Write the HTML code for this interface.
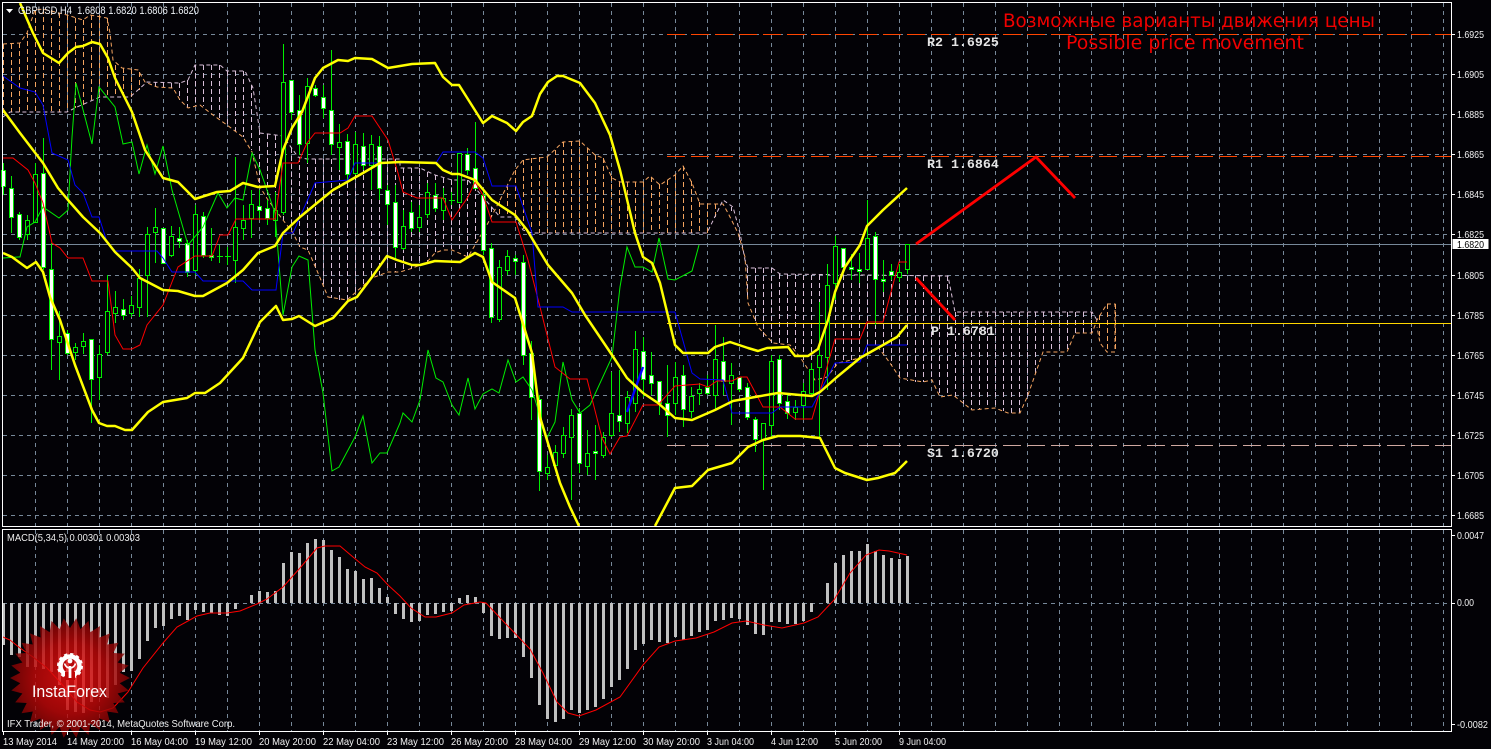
<!DOCTYPE html>
<html><head><meta charset="utf-8"><title>GBPUSD H4</title>
<style>
html,body{margin:0;padding:0;background:#030206;overflow:hidden}
svg{display:block}
text{font-family:"Liberation Sans","DejaVu Sans",sans-serif}
.ax{font-size:10.5px;fill:#f2f2f2}
.lv{font-family:"Liberation Mono",monospace;font-size:13.3px;font-weight:bold;fill:#e4e4e4}
.rd{font-family:"DejaVu Sans",sans-serif;font-size:19px;fill:#f00000}
</style></head>
<body>
<svg width="1491" height="749" viewBox="0 0 1491 749" xmlns="http://www.w3.org/2000/svg">
<rect width="1491" height="749" fill="#030206"/>

<!-- grid -->
<g stroke="#778899" stroke-width="1" fill="none" shape-rendering="crispEdges" stroke-dasharray="4 4">
<path d="M3 34.5H1451M3 74.5H1451M3 114.5H1451M3 154.5H1451M3 194.5H1451M3 234.5H1451M3 275.5H1451M3 315.5H1451M3 355.5H1451M3 395.5H1451M3 435.5H1451M3 475.5H1451M3 515.5H1451"/>
<path d="M35.5 3V526M67.5 3V526M99.5 3V526M131.5 3V526M163.5 3V526M195.5 3V526M227.5 3V526M259.5 3V526M291.5 3V526M323.5 3V526M355.5 3V526M387.5 3V526M419.5 3V526M451.5 3V526M483.5 3V526M515.5 3V526M547.5 3V526M579.5 3V526M611.5 3V526M643.5 3V526M675.5 3V526M707.5 3V526M739.5 3V526M771.5 3V526M803.5 3V526M835.5 3V526M867.5 3V526M899.5 3V526M931.5 3V526M963.5 3V526M995.5 3V526M1027.5 3V526M1059.5 3V526M1091.5 3V526M1123.5 3V526M1155.5 3V526M1187.5 3V526M1219.5 3V526M1251.5 3V526M1283.5 3V526M1315.5 3V526M1347.5 3V526M1379.5 3V526M1411.5 3V526M1443.5 3V526"/>
<path d="M35.5 530V731M67.5 530V731M99.5 530V731M131.5 530V731M163.5 530V731M195.5 530V731M227.5 530V731M259.5 530V731M291.5 530V731M323.5 530V731M355.5 530V731M387.5 530V731M419.5 530V731M451.5 530V731M483.5 530V731M515.5 530V731M547.5 530V731M579.5 530V731M611.5 530V731M643.5 530V731M675.5 530V731M707.5 530V731M739.5 530V731M771.5 530V731M803.5 530V731M835.5 530V731M867.5 530V731M899.5 530V731M931.5 530V731M963.5 530V731M995.5 530V731M1027.5 530V731M1059.5 530V731M1091.5 530V731M1123.5 530V731M1155.5 530V731M1187.5 530V731M1219.5 530V731M1251.5 530V731M1283.5 530V731M1315.5 530V731M1347.5 530V731M1379.5 530V731M1411.5 530V731M1443.5 530V731"/>
<path d="M3 603.5H1451"/>
</g>

<!-- cloud hatch -->
<g fill="none" stroke-width="1" shape-rendering="crispEdges" stroke-dasharray="5 3">
<path stroke="#f4a460" d="M3.5 44V117M11.5 44V112M19.5 43V112M27.5 33V112M35.5 10V112M43.5 9V112M51.5 10V112M59.5 13V112M67.5 15V112M75.5 18V108M83.5 20V105M91.5 15V102M99.5 15V97M107.5 18V97M115.5 65V97M123.5 68V97M131.5 69V97M139.5 72V90M499.5 201V216M507.5 185V217M515.5 170V217M523.5 160V230M531.5 158V233M539.5 157V233M547.5 157V233M555.5 150V233M563.5 142V233M571.5 141V233M579.5 141V233M587.5 148V233M595.5 155V233M603.5 158V233M611.5 176V233M619.5 182V233M627.5 182V233M635.5 182V233M643.5 182V233M651.5 177V233M659.5 184V233M667.5 180V233M675.5 175V233M683.5 166V233M691.5 181V233M699.5 202V233M707.5 204V233M715.5 204V220M1099.5 315V340M1107.5 304V352M1115.5 304V352"/>
<path stroke="#d8bfd8" d="M155.5 82V87M163.5 82V87M171.5 83V88M179.5 83V100M187.5 80V108M195.5 65V106M203.5 65V106M211.5 65V113M219.5 65V120M227.5 71V125M235.5 71V131M243.5 71V137M251.5 85V150M259.5 130V184M267.5 134V198M275.5 135V212M283.5 136V220M291.5 148V230M299.5 157V247M307.5 159V250M315.5 159V270M323.5 159V285M331.5 159V298M339.5 159V300M347.5 159V300M355.5 159V292M363.5 159V286M371.5 159V278M379.5 159V275M387.5 159V271M395.5 159V272M403.5 168V272M411.5 168V270M419.5 168V266M427.5 172V262M435.5 175V253M443.5 178V250M451.5 180V250M459.5 180V252M467.5 180V257M475.5 186V243M483.5 197V230M491.5 207V217M731.5 207V211M739.5 235V240M747.5 268V300M755.5 268V322M763.5 268V337M771.5 268V343M779.5 274V345M787.5 274V346M795.5 274V349M803.5 275V361M811.5 275V375M819.5 275V379M827.5 275V377M835.5 275V367M843.5 275V362M851.5 275V360M859.5 275V358M867.5 276V355M875.5 276V349M883.5 276V354M891.5 276V365M899.5 276V377M907.5 276V381M915.5 276V382M923.5 276V382M931.5 276V380M939.5 276V395M947.5 276V396M955.5 312V398M963.5 312V404M971.5 312V410M979.5 312V409M987.5 312V408M995.5 312V408M1003.5 312V411M1011.5 312V413M1019.5 312V413M1027.5 312V398M1035.5 312V375M1043.5 312V352M1051.5 312V352M1059.5 312V352M1067.5 312V352M1075.5 312V333M1083.5 312V333M1091.5 312V333"/>
</g>
<!-- cloud boundary -->
<g fill="none" stroke-width="1" stroke-dasharray="4 3">
<path stroke="#f4a460" d="M3 44L20 43L27 33L35 10L43 9L67 15L83 20L90 15L107 18L110 33L113 60L122 68L138 70L145 82L157 87L173 88L180 100L188 108L200 105L213 115L227 125L243 137L252 152L260 187L268 200L283 220L293 233L300 247L308 250L318 273L328 297L347 300L372 278L388 272L400 272L413 268L427 262L435 253L443 250L452 250L468 257L488 223L500 200L515 170L523 160L547 157L563 142L580 141L595 155L603 158L612 178L620 182L643 182L650 176L660 185L675 175L683 166L692 183L700 204L723 204L728 213L738 233L745 257L748 303L758 327L773 343L790 345L800 357L815 380L827 377L838 363L860 358L878 347L890 363L900 378L923 382L932 380L940 397L953 395L972 410L995 408L1008 413L1020 413L1028 395L1043 352L1067 352L1075 333L1092 333L1097 320L1107 304L1115 304L1115 352L1107 352L1100 343L1097 327"/>
<path stroke="#d8bfd8" d="M3 117L10 112L67 112L77 107L100 97L130 97L147 82L180 83L188 80L195 65L220 65L227 71L245 71L253 88L260 133L283 136L298 157L307 159L400 159L400 168L420 168L435 175L452 180L468 180L483 197L500 217L515 217L523 230L532 233L707 233L723 200L733 207L740 233L745 260L748 268L772 268L780 274L948 276L955 312L1092 312L1097 320"/>
</g>

<!-- levels -->
<g fill="none" shape-rendering="crispEdges">
<path d="M667 34.5H1451M667 156.5H1451" stroke="#ff4500" stroke-dasharray="18 6"/>
<path d="M667 323.5H1451" stroke="#ffd700"/>
<path d="M667 445.5H1451" stroke="#cfa8a0" stroke-dasharray="18 6"/>
<path d="M3 244.5H1451" stroke="#778899"/>
</g>

<!-- wicks -->
<path fill="none" stroke="#00ee00" stroke-width="1" shape-rendering="crispEdges" d="M3.5 163V195M11.5 176V233M19.5 212V240M27.5 215V240M35.5 163V222M43.5 138V270M51.5 243V370M59.5 311V380M67.5 330V355M75.5 343V360M83.5 333V354M91.5 339V423M99.5 345V400M107.5 275V355M115.5 291V323M123.5 299V320M131.5 296V317M139.5 269V317M147.5 227V317M155.5 208V263M163.5 228V263M171.5 226V257M179.5 227V248M187.5 240V277M195.5 205V275M203.5 212V258M211.5 228V261M219.5 245V263M227.5 247V265M235.5 157V283M243.5 205V240M251.5 190V238M259.5 190V220M267.5 200V225M275.5 192V237M283.5 44V215M291.5 80V120M299.5 95V155M307.5 78V163M315.5 85V97M323.5 85V118M331.5 50V155M339.5 124V170M347.5 134V180M355.5 132V175M363.5 133V170M371.5 135V190M379.5 136V200M387.5 185V225M395.5 185V260M403.5 210V250M411.5 202V232M419.5 205V232M427.5 183V218M435.5 183V212M443.5 188V220M451.5 192V205M459.5 153V203M467.5 148V175M475.5 122V188M483.5 190V255M491.5 243V323M499.5 260V322M507.5 250V275M515.5 255V275M523.5 255V365M531.5 341V420M539.5 395V491M547.5 455V480M555.5 445V470M563.5 427V458M571.5 409V500M579.5 408V473M587.5 430V475M595.5 425V480M603.5 432V458M611.5 372V437M619.5 370V432M627.5 391V433M635.5 331V412M643.5 337V397M651.5 352V395M659.5 381V415M667.5 365V437M675.5 362V415M683.5 365V427M691.5 387V418M699.5 383V405M707.5 375V395M715.5 325V410M723.5 337V395M731.5 363V425M739.5 377V392M747.5 383V420M755.5 417V452M763.5 423V490M771.5 355V437M779.5 355V410M787.5 395V419M795.5 400V420M803.5 383V420M811.5 363V395M819.5 302V437M827.5 264V390M835.5 236V300M843.5 248V270M851.5 254V280M859.5 253V283M867.5 200V270M875.5 232V325M883.5 260V292M891.5 264V280M899.5 264V282M907.5 244V274"/>
<path fill="none" stroke="#00ee00" shape-rendering="crispEdges" d="M217 256.5h6M225 256.5h6M449 200.5h6"/>
<!-- dark bodies -->
<path fill="#030206" stroke="#00ee00" stroke-width="1" shape-rendering="crispEdges" d="M25.5 220.5h4v14h-4zM33.5 174.5h4v48h-4zM57.5 336.5h4v6h-4zM73.5 347.5h4v5h-4zM81.5 341.5h4v5h-4zM97.5 354.5h4v23h-4zM105.5 311.5h4v41h-4zM113.5 307.5h4v6h-4zM129.5 305.5h4v8h-4zM137.5 278.5h4v29h-4zM145.5 234.5h4v41h-4zM153.5 227.5h4v5h-4zM169.5 236.5h4v19h-4zM193.5 214.5h4v56h-4zM233.5 227.5h4v33h-4zM241.5 220.5h4v8h-4zM249.5 204.5h4v14h-4zM273.5 210.5h4v10h-4zM281.5 82.5h4v130h-4zM305.5 86.5h4v57h-4zM337.5 142.5h4v5h-4zM353.5 144.5h4v29h-4zM369.5 144.5h4v21h-4zM401.5 226.5h4v22h-4zM417.5 217.5h4v10h-4zM425.5 192.5h4v22h-4zM441.5 198.5h4v12h-4zM457.5 153.5h4v49h-4zM497.5 267.5h4v52h-4zM505.5 256.5h4v14h-4zM545.5 467.5h4v6h-4zM553.5 452.5h4v13h-4zM561.5 435.5h4v18h-4zM569.5 415.5h4v22h-4zM585.5 453.5h4v13h-4zM601.5 437.5h4v18h-4zM609.5 413.5h4v22h-4zM625.5 397.5h4v26h-4zM633.5 349.5h4v54h-4zM673.5 377.5h4v26h-4zM689.5 396.5h4v15h-4zM697.5 389.5h4v4h-4zM713.5 359.5h4v36h-4zM729.5 375.5h4v8h-4zM761.5 423.5h4v16h-4zM769.5 361.5h4v64h-4zM793.5 407.5h4v5h-4zM801.5 391.5h4v14h-4zM809.5 369.5h4v24h-4zM817.5 355.5h4v12h-4zM825.5 285.5h4v72h-4zM833.5 246.5h4v37h-4zM865.5 238.5h4v31h-4zM897.5 272.5h4v5h-4zM905.5 244.5h4v25h-4z"/>
<!-- white bodies -->
<path fill="#ffffff" stroke="#00ee00" stroke-width="1" shape-rendering="crispEdges" d="M1.5 170.5h4v16h-4zM9.5 188.5h4v29h-4zM17.5 214.5h4v23h-4zM41.5 173.5h4v94h-4zM49.5 269.5h4v70h-4zM65.5 333.5h4v20h-4zM89.5 339.5h4v40h-4zM121.5 309.5h4v6h-4zM161.5 228.5h4v35h-4zM177.5 238.5h4v3h-4zM185.5 243.5h4v29h-4zM201.5 216.5h4v39h-4zM209.5 255.5h4v2h-4zM257.5 206.5h4v4h-4zM265.5 208.5h4v10h-4zM289.5 80.5h4v32h-4zM297.5 110.5h4v34h-4zM313.5 88.5h4v7h-4zM321.5 97.5h4v11h-4zM329.5 110.5h4v34h-4zM345.5 141.5h4v33h-4zM361.5 146.5h4v19h-4zM377.5 146.5h4v42h-4zM385.5 190.5h4v14h-4zM393.5 202.5h4v45h-4zM409.5 212.5h4v16h-4zM433.5 195.5h4v13h-4zM465.5 154.5h4v16h-4zM473.5 168.5h4v20h-4zM481.5 195.5h4v55h-4zM489.5 248.5h4v69h-4zM513.5 258.5h4v3h-4zM521.5 262.5h4v93h-4zM529.5 353.5h4v44h-4zM537.5 399.5h4v72h-4zM577.5 413.5h4v50h-4zM593.5 451.5h4v2h-4zM617.5 415.5h4v6h-4zM641.5 351.5h4v28h-4zM649.5 375.5h4v8h-4zM657.5 381.5h4v22h-4zM665.5 403.5h4v12h-4zM681.5 375.5h4v34h-4zM705.5 387.5h4v6h-4zM721.5 361.5h4v20h-4zM737.5 377.5h4v12h-4zM745.5 387.5h4v30h-4zM753.5 419.5h4v20h-4zM777.5 359.5h4v44h-4zM785.5 401.5h4v12h-4zM841.5 248.5h4v19h-4zM849.5 267.5h4v2h-4zM857.5 269.5h4v2h-4zM873.5 236.5h4v43h-4zM881.5 279.5h4v2h-4zM889.5 271.5h4v4h-4z"/>

<!-- chikou green -->
<path fill="none" stroke="#00ee00" stroke-width="1" d="M3 258L18 257L20 257L27 227L35 222L43 207L59 218L68 210L72 137L76 83L92 144L99 87L115 107L123 144L132 142L139 174L147 145L155 174L163 146L172 190L188 245L203 227L218 193L227 208L235 198L243 200L252 153L260 170L275 213L283 315L292 267L299 256L308 260L315 350L323 393L332 471L339 467L355 437L363 416L372 463L380 453L387 453L400 423L403 413L412 422L420 400L428 350L436 378L443 382L452 405L459 415L468 378L475 409L483 394L492 389L499 393L508 360L516 382L523 377L532 390L547 438L555 422L563 362L572 400L580 413L590 405L612 357L620 287L627 247L635 267L643 267L652 272L659 238L668 279L675 280L692 271L699 245"/>
<!-- tenkan red -->
<path fill="none" stroke="#ff0000" stroke-width="1" d="M3 158L13 158L28 170L35 183L43 203L52 243L60 248L68 258L83 258L92 281L108 281L115 335L123 349L132 349L140 345L147 325L163 305L172 282L178 267L195 256L212 256L220 235L228 235L236 219L275 219L283 163L298 163L307 143L315 133L340 133L348 128L355 116L372 116L388 140L398 173L403 192L417 198L443 198L452 220L468 197L475 182L483 195L492 222L516 222L528 260L540 307L555 367L570 379L587 379L602 438L610 454L620 437L627 436L643 405L658 405L675 386L700 384L708 387L717 381L732 381L740 377L747 377L763 407L780 407L795 419L812 419L835 339L860 339L867 322L883 322L899 262L907 262"/>
<!-- kijun blue -->
<path fill="none" stroke="#0000ff" stroke-width="1" d="M3 76L20 88L35 92L43 105L52 153L68 160L75 185L83 193L92 217L99 217L107 242L115 251L157 251L163 258L172 272L195 272L203 281L243 281L252 290L276 290L283 233L293 233L315 183L348 180L355 163L436 163L443 152L475 152L483 158L492 186L516 186L532 233L538 307L563 307L572 312L675 312L692 373L700 379L723 380L732 413L772 413L780 407L812 407L835 363L860 362L867 345L907 345"/>
<path fill="none" stroke="#0000ff" stroke-width="2.4" d="M627 412L643 367"/>

<!-- bollinger yellow -->
<g fill="none" stroke="#ffff00" stroke-width="2.5" stroke-linejoin="round">
<path d="M20 3L33 33L43 53L59 63L68 53L76 47L83 46L92 42L100 44L108 58L115 78L132 112L145 150L163 178L178 182L195 199L217 192L230 191L243 183L258 187L275 186L283 150L292 128L302 112L315 78L323 68L338 60L348 61L355 58L372 59L388 68L400 66L412 64L435 63L443 77L452 85L459 85L483 123L492 116L507 123L516 131L523 122L532 116L540 94L548 82L557 76L563 76L580 83L595 103L610 135L620 170L635 233L643 257L652 263L660 283L675 345L683 353L708 353L715 347L730 342L748 348L758 351L767 348L788 347L795 356L808 356L818 349L828 320L835 292L845 267L860 245L867 226L883 210L907 188"/>
<path d="M3 110L20 133L33 150L43 163L58 188L68 200L83 217L100 233L115 252L132 268L140 278L163 290L178 291L195 296L203 296L227 283L243 270L258 253L275 246L283 233L300 217L317 203L333 190L363 173L380 163L400 162L436 163L443 170L452 174L459 174L475 180L492 200L515 215L527 230L548 265L572 293L585 315L612 355L627 378L643 393L658 403L675 418L692 420L715 410L733 401L755 397L778 393L800 395L812 396L820 392L837 377L860 358L883 345L897 337L907 325"/>
<path d="M3 253L12 257L27 268L36 262L43 272L50 297L60 320L75 365L92 410L99 423L107 426L115 426L125 430L132 430L148 412L163 402L187 398L195 393L205 393L220 383L243 358L260 322L276 306L283 320L292 319L299 316L315 326L333 318L348 301L357 297L372 277L387 256L397 260L412 265L420 265L435 261L460 262L475 253L483 257L492 282L515 298L532 353L540 417L547 440L560 483L570 507L579 526"/>
<path d="M655 526L675 488L692 486L708 470L732 463L748 447L763 440L778 436L800 436L820 438L835 468L845 473L867 480L878 478L895 473L907 461"/>
</g>

<!-- red arrows -->
<g fill="none" stroke="#ff0000" stroke-width="2.8">
<path d="M916 244L1036 157L1075 198"/>
<path d="M916 278L955 320"/>
</g>

<!-- macd bars -->
<path fill="none" stroke="#c0c0c0" stroke-width="3" shape-rendering="crispEdges" d="M3.5 603V645M11.5 603V655M19.5 603V657M27.5 603V667M35.5 603V667M43.5 603V669M51.5 603V672M59.5 603V685M67.5 603V710M75.5 603V712M83.5 603V713M91.5 603V702M99.5 603V695M107.5 603V698M115.5 603V685M123.5 603V672M131.5 603V671M139.5 603V659M147.5 603V641M155.5 603V628M163.5 603V626M171.5 603V619M179.5 603V616M187.5 603V620M195.5 603V610M203.5 603V612M211.5 603V613M219.5 603V615M227.5 603V616M235.5 603V609M251.5 603V595M259.5 603V591M267.5 603V592M275.5 603V591M283.5 603V563M291.5 603V552M299.5 603V553M307.5 603V543M315.5 603V539M323.5 603V540M331.5 603V550M339.5 603V557M347.5 603V569M355.5 603V571M363.5 603V579M371.5 603V578M379.5 603V588M387.5 603V597M395.5 603V614M403.5 603V619M411.5 603V622M419.5 603V621M427.5 603V615M435.5 603V614M443.5 603V612M451.5 603V611M459.5 603V598M467.5 603V595M475.5 603V597M483.5 603V613M491.5 603V636M499.5 603V639M507.5 603V638M515.5 603V638M523.5 603V657M531.5 603V678M539.5 603V705M547.5 603V719M555.5 603V722M563.5 603V719M571.5 603V710M579.5 603V713M587.5 603V710M595.5 603V707M603.5 603V699M611.5 603V687M619.5 603V680M627.5 603V669M635.5 603V650M643.5 603V644M651.5 603V640M659.5 603V642M667.5 603V643M675.5 603V637M683.5 603V640M691.5 603V636M699.5 603V632M707.5 603V630M715.5 603V621M723.5 603V620M731.5 603V618M739.5 603V619M747.5 603V625M755.5 603V634M763.5 603V635M771.5 603V622M779.5 603V622M787.5 603V624M795.5 603V624M803.5 603V621M811.5 603V612M827.5 603V583M835.5 603V563M843.5 603V555M851.5 603V551M859.5 603V551M867.5 603V544M875.5 603V551M883.5 603V555M891.5 603V558M899.5 603V559M907.5 603V556"/>
<!-- macd signal -->
<path fill="none" stroke="#ff0000" stroke-width="1" d="M3 637L10 640L20 648L33 657L47 668L60 682L77 702L90 710L100 712L113 708L128 692L143 668L163 643L177 627L197 616L210 613L227 613L240 611L257 604L267 599L283 587L300 568L317 548L325 546L340 546L353 557L365 567L377 573L388 585L400 596L411 608L425 617L436 617L452 613L464 605L480 602L486 603L504 622L530 649L543 673L557 702L568 713L579 716L596 710L620 697L643 665L659 647L675 641L696 638L714 632L732 623L746 621L764 625L782 628L804 623L818 617L834 600L850 573L866 555L879 550L889 551L907 555"/>

<!-- logo -->
<defs><radialGradient id="lg" cx="50%" cy="50%" r="50%"><stop offset="0" stop-color="#f01010"/><stop offset=".6" stop-color="#c00808"/><stop offset="1" stop-color="#7e0404"/></radialGradient></defs>
<polygon opacity=".82" fill="url(#lg)" points="130,678 119.7,683.2 128.7,690.5 117.6,693.5 124.8,702.4 113.3,703 118.5,713.3 107.2,711.5 110.1,722.6 99.4,718.5 100,730 90.3,723.7 88.5,735.1 80.4,726.9 76.3,737.7 70,728 63.7,737.7 59.6,726.9 51.5,735.1 49.7,723.7 40,730 40.6,718.5 29.9,722.6 32.8,711.5 21.5,713.3 26.7,703 15.2,702.4 22.4,693.5 11.3,690.5 20.3,683.2 10,678 20.3,672.8 11.3,665.5 22.4,662.5 15.2,653.6 26.7,653 21.5,642.7 32.8,644.5 29.9,633.4 40.6,637.5 40,626 49.7,632.3 51.5,620.9 59.6,629.1 63.7,618.3 70,628 76.3,618.3 80.4,629.1 88.5,620.9 90.3,632.3 100,626 99.4,637.5 110.1,633.4 107.2,644.5 118.5,642.7 113.3,653 124.8,653.6 117.6,662.5 128.7,665.5 119.7,672.8"/>
<g fill="none" stroke="#ffffff">
<circle cx="70" cy="666" r="9.5" stroke-width="4.5"/>
<circle cx="70" cy="666" r="11.5" stroke-width="3" stroke-dasharray="3.2 2.8"/>
</g>
<rect x="65" y="672" width="10" height="8" fill="#c00808"/>
<circle cx="70" cy="661" r="2.4" fill="#fff"/>
<path d="M64.5 663.5Q66 668 70 668Q74 668 75.5 663.5" fill="none" stroke="#fff" stroke-width="1.6"/>
<rect x="68.6" y="666" width="2.8" height="12" fill="#fff"/>
<text x="32" y="697" font-size="16.5" fill="#ffffff" textLength="75" lengthAdjust="spacingAndGlyphs">InstaForex</text>

<!-- frame -->
<g fill="none" stroke="#ffffff" stroke-width="1" shape-rendering="crispEdges">
<path d="M2.5 2.5H1451.5V526.5H2.5ZM2.5 529.5H1451.5V731.5H2.5Z"/>
<path d="M1451 34.5h4M1451 74.5h4M1451 114.5h4M1451 154.5h4M1451 194.5h4M1451 234.5h4M1451 275.5h4M1451 315.5h4M1451 355.5h4M1451 395.5h4M1451 435.5h4M1451 475.5h4M1451 515.5h4M1451 535.5h4M1451 603.5h4M1451 724.5h4"/>
<path d="M3.5 731v4M67.5 731v4M131.5 731v4M195.5 731v4M259.5 731v4M323.5 731v4M387.5 731v4M451.5 731v4M515.5 731v4M579.5 731v4M643.5 731v4M707.5 731v4M771.5 731v4M835.5 731v4M899.5 731v4"/>
</g>

<!-- right axis -->
<g class="ax">
<text class="ax" x="1457" y="38" textLength="27" lengthAdjust="spacingAndGlyphs">1.6925</text>
<text class="ax" x="1457" y="78" textLength="27" lengthAdjust="spacingAndGlyphs">1.6905</text>
<text class="ax" x="1457" y="118" textLength="27" lengthAdjust="spacingAndGlyphs">1.6885</text>
<text class="ax" x="1457" y="158" textLength="27" lengthAdjust="spacingAndGlyphs">1.6865</text>
<text class="ax" x="1457" y="198" textLength="27" lengthAdjust="spacingAndGlyphs">1.6845</text>
<text class="ax" x="1457" y="238" textLength="27" lengthAdjust="spacingAndGlyphs">1.6825</text>
<text class="ax" x="1457" y="279" textLength="27" lengthAdjust="spacingAndGlyphs">1.6805</text>
<text class="ax" x="1457" y="319" textLength="27" lengthAdjust="spacingAndGlyphs">1.6785</text>
<text class="ax" x="1457" y="359" textLength="27" lengthAdjust="spacingAndGlyphs">1.6765</text>
<text class="ax" x="1457" y="399" textLength="27" lengthAdjust="spacingAndGlyphs">1.6745</text>
<text class="ax" x="1457" y="439" textLength="27" lengthAdjust="spacingAndGlyphs">1.6725</text>
<text class="ax" x="1457" y="479" textLength="27" lengthAdjust="spacingAndGlyphs">1.6705</text>
<text class="ax" x="1457" y="519" textLength="27" lengthAdjust="spacingAndGlyphs">1.6685</text>
<text class="ax" x="1457" y="539" textLength="27" lengthAdjust="spacingAndGlyphs">0.0047</text>
<text class="ax" x="1457" y="606" textLength="17" lengthAdjust="spacingAndGlyphs">0.00</text>
<text class="ax" x="1457" y="728" textLength="31" lengthAdjust="spacingAndGlyphs">-0.0082</text>
</g>
<rect x="1452.5" y="239" width="36" height="10" fill="#ffffff"/>
<text x="1457" y="248" font-size="10.5" fill="#000" textLength="27" lengthAdjust="spacingAndGlyphs">1.6820</text>

<!-- date axis -->
<g>
<text class="ax" x="3" y="745" textLength="54" lengthAdjust="spacingAndGlyphs">13 May 2014</text>
<text class="ax" x="67" y="745" textLength="57" lengthAdjust="spacingAndGlyphs">14 May 20:00</text>
<text class="ax" x="131" y="745" textLength="57" lengthAdjust="spacingAndGlyphs">16 May 04:00</text>
<text class="ax" x="195" y="745" textLength="57" lengthAdjust="spacingAndGlyphs">19 May 12:00</text>
<text class="ax" x="259" y="745" textLength="57" lengthAdjust="spacingAndGlyphs">20 May 20:00</text>
<text class="ax" x="323" y="745" textLength="57" lengthAdjust="spacingAndGlyphs">22 May 04:00</text>
<text class="ax" x="387" y="745" textLength="57" lengthAdjust="spacingAndGlyphs">23 May 12:00</text>
<text class="ax" x="451" y="745" textLength="57" lengthAdjust="spacingAndGlyphs">26 May 20:00</text>
<text class="ax" x="515" y="745" textLength="57" lengthAdjust="spacingAndGlyphs">28 May 04:00</text>
<text class="ax" x="579" y="745" textLength="57" lengthAdjust="spacingAndGlyphs">29 May 12:00</text>
<text class="ax" x="643" y="745" textLength="57" lengthAdjust="spacingAndGlyphs">30 May 20:00</text>
<text class="ax" x="707" y="745" textLength="47" lengthAdjust="spacingAndGlyphs">3 Jun 04:00</text>
<text class="ax" x="771" y="745" textLength="47" lengthAdjust="spacingAndGlyphs">4 Jun 12:00</text>
<text class="ax" x="835" y="745" textLength="47" lengthAdjust="spacingAndGlyphs">5 Jun 20:00</text>
<text class="ax" x="899" y="745" textLength="47" lengthAdjust="spacingAndGlyphs">9 Jun 04:00</text>
</g>

<!-- chart labels -->
<polygon points="6,9 13,9 9.5,13" fill="#ffffff"/>
<text x="18" y="14" font-size="10.8" fill="#eef2f6" textLength="181" lengthAdjust="spacingAndGlyphs" xml:space="preserve">GBPUSD,H4  1.6808 1.6820 1.6806 1.6820</text>
<text x="7" y="541" font-size="10.5" fill="#eeeeee" textLength="133" lengthAdjust="spacingAndGlyphs">MACD(5,34,5) 0.00301 0.00303</text>
<text x="7" y="727" font-size="10.5" fill="#eeeeee" textLength="228" lengthAdjust="spacingAndGlyphs">IFX Trader, © 2001-2014, MetaQuotes Software Corp.</text>

<text class="lv" x="927" y="46">R2 1.6925</text>
<text class="lv" x="927" y="168">R1 1.6864</text>
<text class="lv" x="931" y="335">P 1.6781</text>
<text class="lv" x="927" y="457">S1 1.6720</text>

<text class="rd" x="1003" y="27" textLength="372" lengthAdjust="spacingAndGlyphs">Возможные варианты движения цены</text>
<text class="rd" x="1066" y="49" textLength="238" lengthAdjust="spacingAndGlyphs">Possible price movement</text>
</svg>
</body></html>
